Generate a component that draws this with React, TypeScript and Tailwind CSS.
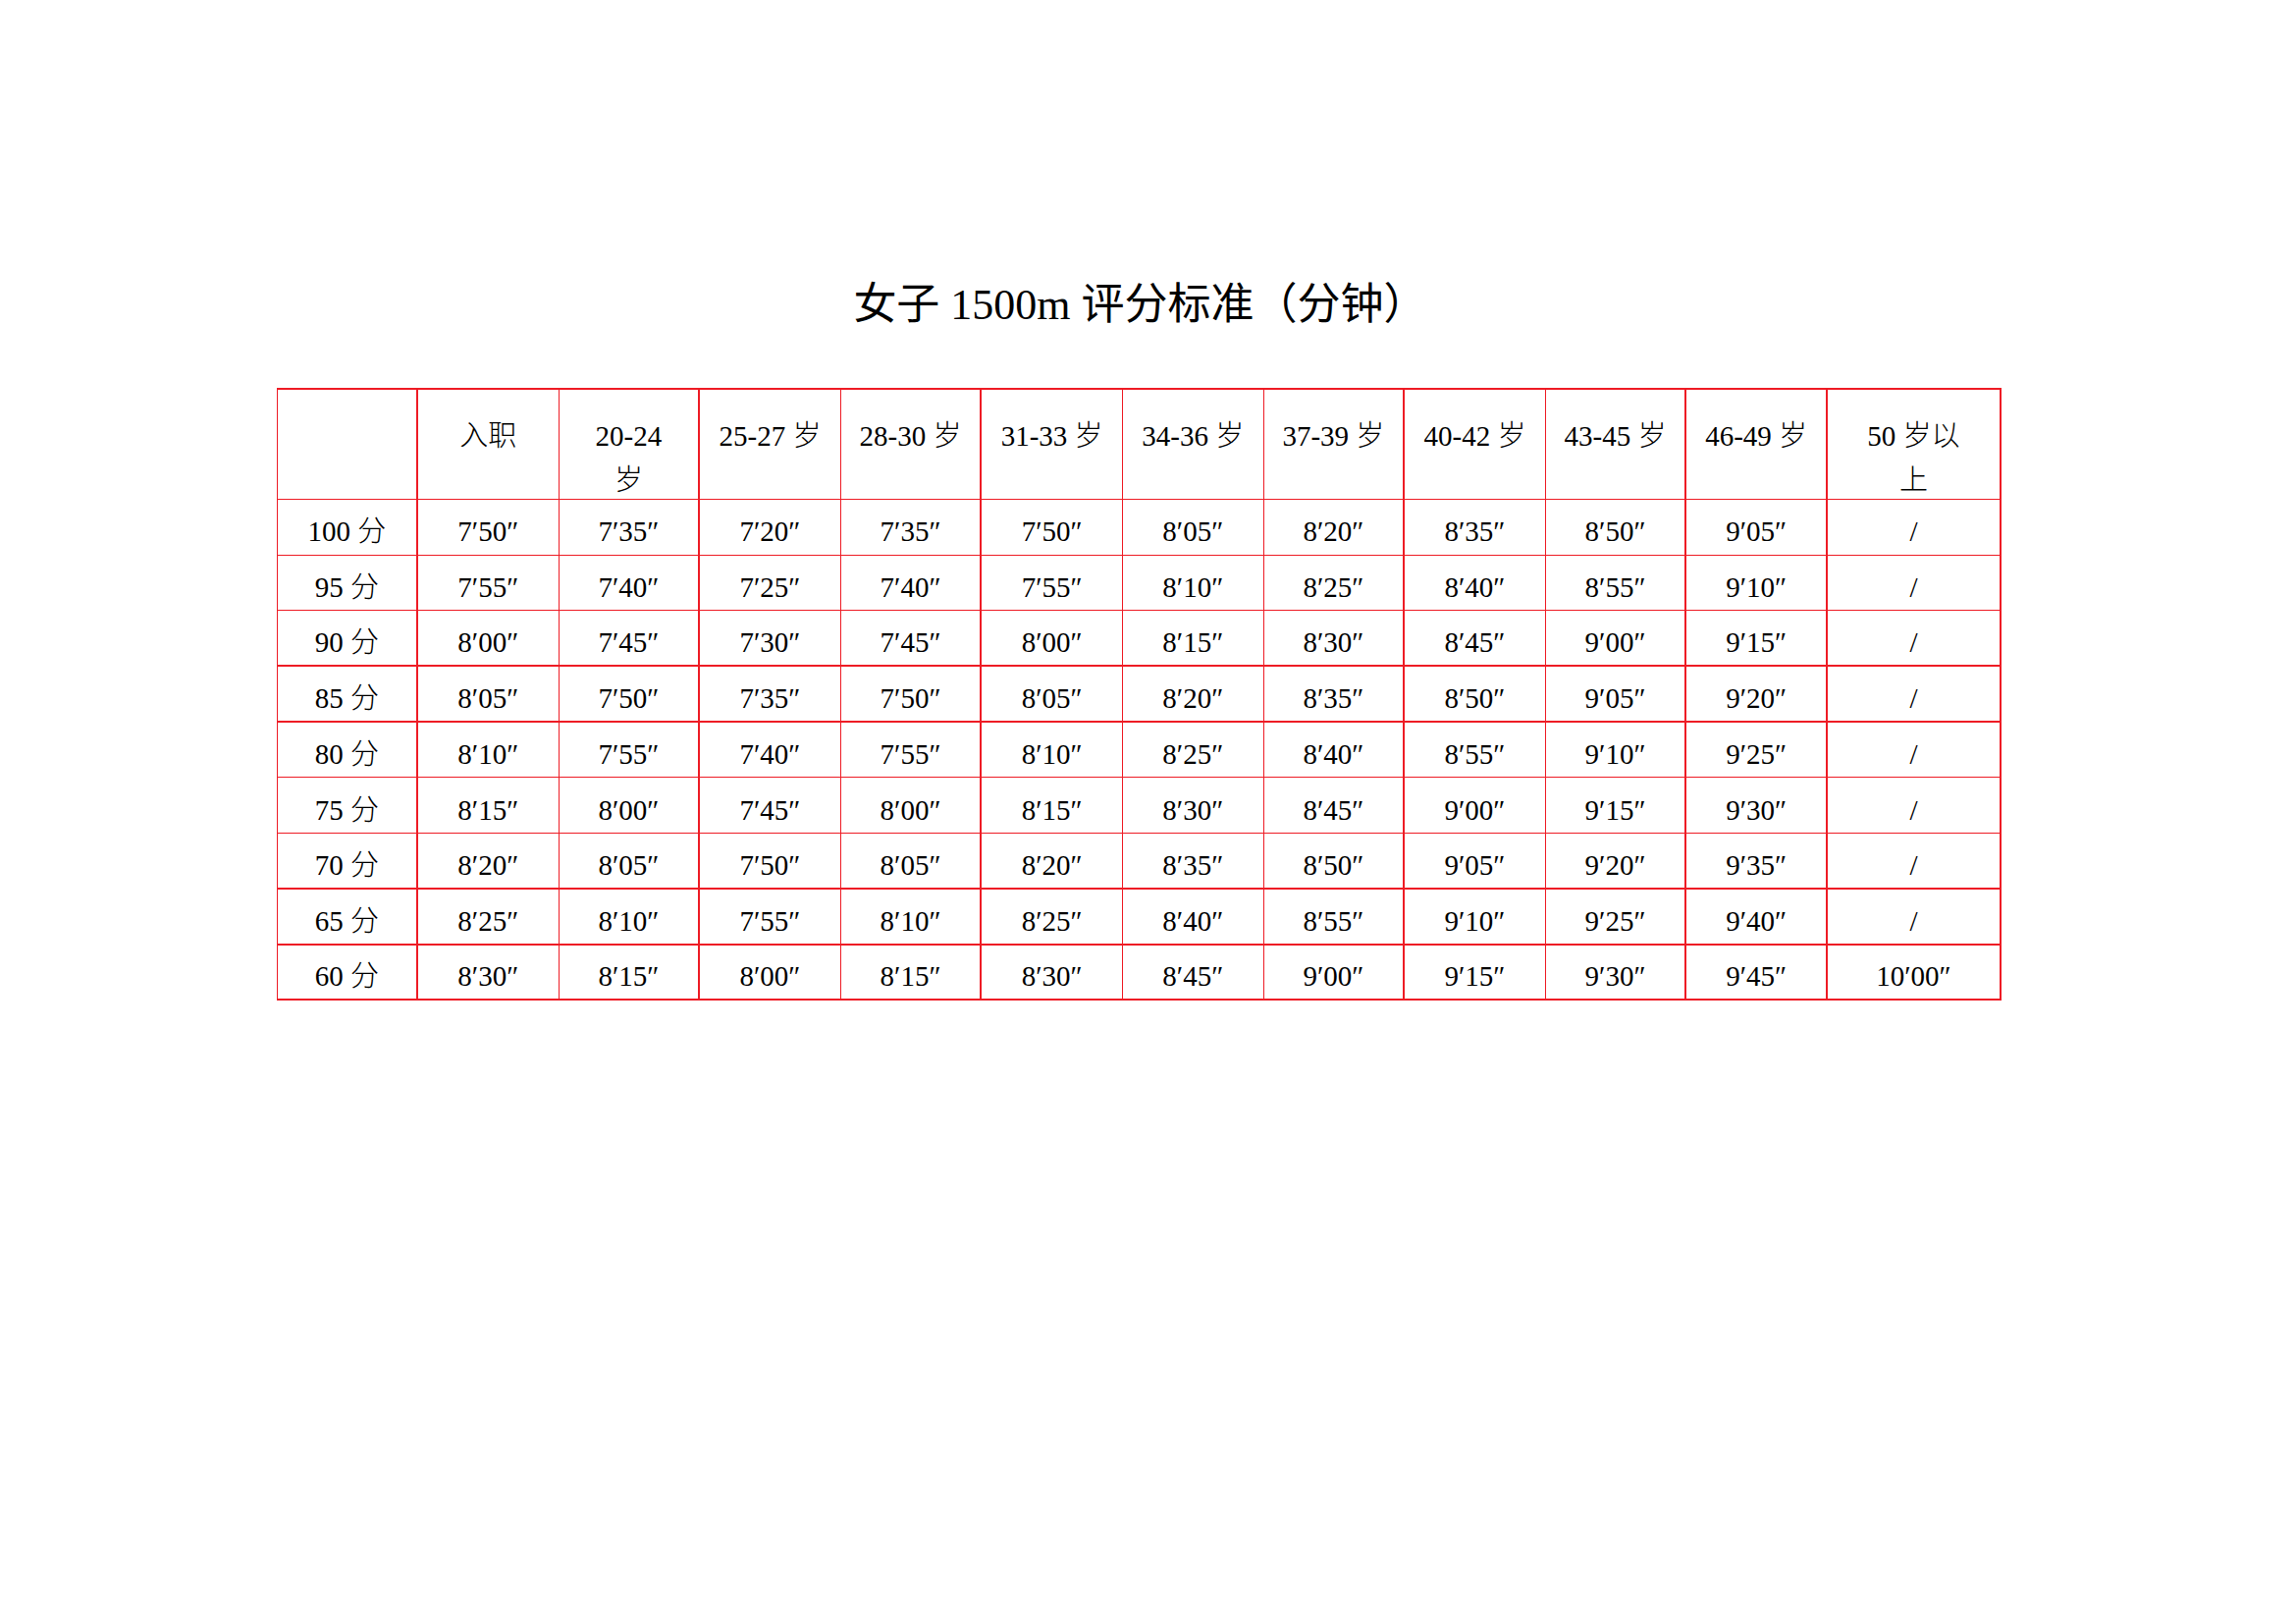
const headers: string[][] = [
  [],
  ['入职'],
  ['20-24', '岁'],
  ['25-27 岁'],
  ['28-30 岁'],
  ['31-33 岁'],
  ['34-36 岁'],
  ['37-39 岁'],
  ['40-42 岁'],
  ['43-45 岁'],
  ['46-49 岁'],
  ['50 岁以', '上'],
]

const rows: string[][] = [
  ['100 分', '7′50″', '7′35″', '7′20″', '7′35″', '7′50″', '8′05″', '8′20″', '8′35″', '8′50″', '9′05″', '/'],
  ['95 分', '7′55″', '7′40″', '7′25″', '7′40″', '7′55″', '8′10″', '8′25″', '8′40″', '8′55″', '9′10″', '/'],
  ['90 分', '8′00″', '7′45″', '7′30″', '7′45″', '8′00″', '8′15″', '8′30″', '8′45″', '9′00″', '9′15″', '/'],
  ['85 分', '8′05″', '7′50″', '7′35″', '7′50″', '8′05″', '8′20″', '8′35″', '8′50″', '9′05″', '9′20″', '/'],
  ['80 分', '8′10″', '7′55″', '7′40″', '7′55″', '8′10″', '8′25″', '8′40″', '8′55″', '9′10″', '9′25″', '/'],
  ['75 分', '8′15″', '8′00″', '7′45″', '8′00″', '8′15″', '8′30″', '8′45″', '9′00″', '9′15″', '9′30″', '/'],
  ['70 分', '8′20″', '8′05″', '7′50″', '8′05″', '8′20″', '8′35″', '8′50″', '9′05″', '9′20″', '9′35″', '/'],
  ['65 分', '8′25″', '8′10″', '7′55″', '8′10″', '8′25″', '8′40″', '8′55″', '9′10″', '9′25″', '9′40″', '/'],
  ['60 分', '8′30″', '8′15″', '8′00″', '8′15″', '8′30″', '8′45″', '9′00″', '9′15″', '9′30″', '9′45″', '10′00″'],
]

// heavier rules where the scan shows them
const thickRight = [0, 2, 4, 7, 9, 10, 11]
const thickBottom = [3, 4, 7, 8, 9]

function cellBorders(r: number, c: number) {
  const right = thickRight.includes(c) ? 'border-r-2' : 'border-r'
  const bottom = thickBottom.includes(r) ? 'border-b-2' : 'border-b'
  const top = r === 0 ? 'border-t-2' : ''
  const left = c === 0 ? 'border-l' : ''
  return `${right} ${bottom} ${top} ${left}`
}

export default function App() {
  return (
    <div className="w-[2339px] h-[1654px] bg-white text-black" style={{ fontFamily: '"Liberation Serif", "Noto Sans CJK SC", serif' }}>
      <div className="pl-[282px] pt-[281px]">
        <h1 className="w-[1759px] text-center text-[44px] leading-[60px] font-normal mb-[54px]">
          女子 1500m 评分标准（分钟）
        </h1>
        <div className="grid grid-cols-[144px_repeat(10,143.6px)_177px] grid-rows-[114px_repeat(9,56.7px)] text-[29px] font-light">
          {headers.map((lines, c) => (
            <div
              key={`h${c}`}
              className={`${cellBorders(0, c)} border-[#ee1c25] flex flex-col items-center pt-[25px] leading-[45px] text-center`}
            >
              {lines.map((l, i) => (
                <span key={i}>{l}</span>
              ))}
            </div>
          ))}
          {rows.map((row, r) =>
            row.map((v, c) => (
              <div
                key={`${r}-${c}`}
                className={`${cellBorders(r + 1, c)} border-[#ee1c25] flex items-center justify-center pt-[10px] leading-none`}
              >
                {v}
              </div>
            )),
          )}
        </div>
      </div>
    </div>
  )
}
